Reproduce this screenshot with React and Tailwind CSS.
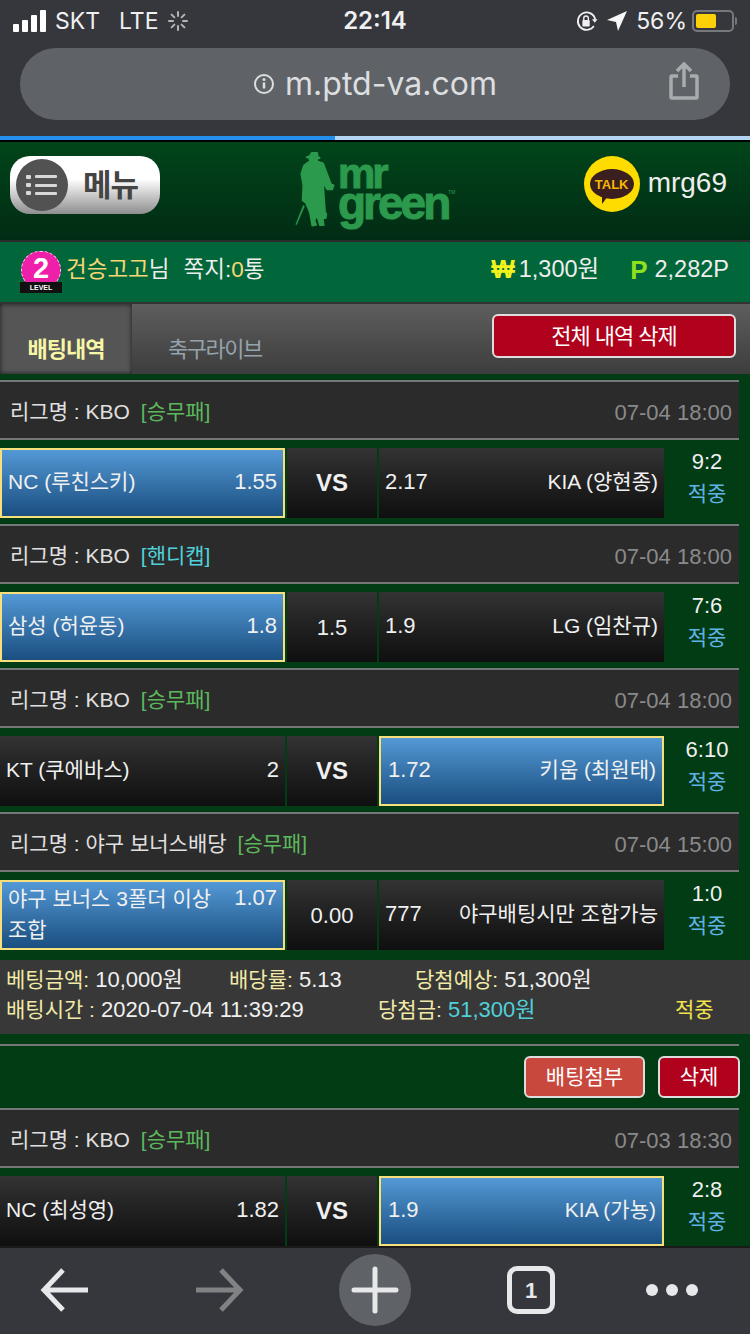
const FONT = "font-['Liberation_Sans','Noto_Sans_CJK_KR',sans-serif]";

const bets = [
  {
    league: '리그명 : KBO',
    type: '[승무패]',
    typeColor: 'text-[#5cb85c]',
    date: '07-04 18:00',
    home: 'NC (루친스키)',
    homeOdds: '1.55',
    mid: 'VS',
    awayOdds: '2.17',
    away: 'KIA (양현종)',
    pick: 'home',
    score: '9:2',
  },
  {
    league: '리그명 : KBO',
    type: '[핸디캡]',
    typeColor: 'text-[#4fd1d9]',
    date: '07-04 18:00',
    home: '삼성 (허윤동)',
    homeOdds: '1.8',
    mid: '1.5',
    awayOdds: '1.9',
    away: 'LG (임찬규)',
    pick: 'home',
    score: '7:6',
  },
  {
    league: '리그명 : KBO',
    type: '[승무패]',
    typeColor: 'text-[#5cb85c]',
    date: '07-04 18:00',
    home: 'KT (쿠에바스)',
    homeOdds: '2',
    mid: 'VS',
    awayOdds: '1.72',
    away: '키움 (최원태)',
    pick: 'away',
    score: '6:10',
  },
  {
    league: '리그명 : 야구 보너스배당',
    type: '[승무패]',
    typeColor: 'text-[#5cb85c]',
    date: '07-04 15:00',
    home: '야구 보너스 3폴더 이상 조합',
    homeOdds: '1.07',
    mid: '0.00',
    awayOdds: '777',
    away: '야구배팅시만 조합가능',
    pick: 'home',
    score: '1:0',
    wrap: true,
  },
];

const lastBet = {
  league: '리그명 : KBO',
  type: '[승무패]',
  typeColor: 'text-[#5cb85c]',
  date: '07-03 18:30',
  home: 'NC (최성영)',
  homeOdds: '1.82',
  mid: 'VS',
  awayOdds: '1.9',
  away: 'KIA (가뇽)',
  pick: 'away',
  score: '2:8',
};

function StatusBar() {
  return (
    <div className="flex h-[48px] items-center justify-between pb-[6px] pl-[13px] pr-[13px] font-['Inter',sans-serif] text-[23px] text-[#f0f0f2]">
      <div className="flex w-[260px] items-center">
        <div className="flex items-end gap-[3px]">
          <span className="h-[8px] w-[6px] rounded-[1px] bg-white" />
          <span className="h-[12px] w-[6px] rounded-[1px] bg-white" />
          <span className="h-[17px] w-[6px] rounded-[1px] bg-white" />
          <span className="h-[22px] w-[6px] rounded-[1px] bg-white" />
        </div>
        <span className="ml-[9px]">SKT</span>
        <span className="ml-[19px]">LTE</span>
        <svg width="20" height="20" viewBox="0 0 20 20" className="ml-[9px]" stroke="#b5b5b8" strokeWidth="2" strokeLinecap="round">
          <path d="M10 1v4M10 15v4M1 10h4M15 10h4M3.600 3.600l2.800 2.800M13.600 13.600l2.800 2.800M3.600 16.400l2.800-2.800M13.600 6.400l2.800-2.800" />
        </svg>
      </div>
      <span className="text-[24px] font-semibold">22:14</span>
      <div className="flex w-[260px] items-center justify-end">
        <svg width="23" height="22" viewBox="0 0 24 24" fill="none">
          <path d="M20 17.500a9.500 9.500 0 1 1 1.500-7" stroke="#f0f0f2" strokeWidth="2" />
          <path d="M18 10h6l-3 4z" fill="#f0f0f2" />
          <rect x="7.500" y="11" width="8" height="7" rx="1" fill="#f0f0f2" />
          <path d="M9 11V9a2.500 2.500 0 0 1 5 0v2" stroke="#f0f0f2" strokeWidth="1.500" />
        </svg>
        <svg width="20" height="20" viewBox="0 0 20 20" className="ml-[9px]">
          <path d="M20 0 11 20l-2-9-9-2z" fill="#f7f7f7" />
        </svg>
        <span className="ml-[9px]">56%</span>
        <div className="ml-[5px] flex h-[22px] w-[42px] items-center rounded-[5px] border-2 border-[#77787c] p-[2px]">
          <span className="h-full w-[20px] rounded-[2px] bg-[#fdd108]" />
        </div>
        <span className="ml-[1px] h-[8px] w-[2px] rounded-r bg-[#77787c]" />
      </div>
    </div>
  );
}

function UrlBar() {
  return (
    <div className="relative mx-[20px] flex h-[72px] items-center justify-center rounded-[36px] bg-[#5f6367] font-['Inter',sans-serif]">
      <svg width="22" height="22" viewBox="0 0 22 22" fill="none" className="mr-[10px]">
        <circle cx="11" cy="11" r="9" stroke="#dcdee0" strokeWidth="2" />
        <path d="M11 9.500v6" stroke="#dcdee0" strokeWidth="2.500" />
        <circle cx="11" cy="6.500" r="1.500" fill="#dcdee0" />
      </svg>
      <span className="text-[32px] text-[#dcdee0]">m.ptd-va.com</span>
      <svg width="30" height="38" viewBox="0 0 30 38" fill="none" stroke="#a9acaf" strokeWidth="3.500" className="absolute right-[31px] top-[14px]">
        <path d="M9 14H3a1 1 0 0 0-1 1v20a1 1 0 0 0 1 1h24a1 1 0 0 0 1-1V15a1 1 0 0 0-1-1h-6" />
        <path d="M15 25V3M8 9l7-7 7 7" />
      </svg>
    </div>
  );
}

function MenuButton() {
  return (
    <div className="flex h-[58px] w-[150px] items-center rounded-[20px] bg-gradient-to-b from-white from-40% to-[#8f8f8f] pl-[6px]">
      <div className="flex h-[52px] w-[52px] items-center justify-center rounded-full bg-[#525252]">
        <svg width="32" height="24" viewBox="0 0 32 24" fill="#d8d8d8">
          <rect x="0" y="2" width="5" height="4" rx="1" />
          <rect x="9" y="2" width="22" height="3" rx="1" />
          <rect x="0" y="10" width="5" height="4" rx="1" />
          <rect x="9" y="11" width="22" height="3" rx="1" />
          <rect x="0" y="18" width="5" height="4" rx="1" />
          <rect x="9" y="19" width="22" height="3" rx="1" />
        </svg>
      </div>
      <span className="ml-[15px] text-[31px] font-bold leading-none tracking-[-1px] text-[#444]">메뉴</span>
    </div>
  );
}

function Logo() {
  return (
    <div className="flex items-start">
      <svg width="43" height="76" viewBox="40 22 130 228" fill="#2b9a4d" stroke="#2b9a4d" strokeWidth="5" strokeLinejoin="round" className="mt-[-5px]">
        <path d="M93 27 110 27 112 38 118 42 110 45 110 52 128 58 138 85 152 122 160 125 156 137 140 137 128 115 130 150 134 205 138 212 136 224 127 224 130 245 118 245 110 218 102 230 107 245 95 247 88 207 76 178 66 170 68 125 62 90 70 65 88 52 86 42 78 40 88 36Z" />
        <path d="M68 185 45 243 48 244 72 188Z" strokeWidth="1" />
      </svg>
      <div className="ml-[1px] mt-[2px] flex flex-col font-['Liberation_Sans',sans-serif] font-bold text-[#2b9a4d] [-webkit-text-stroke:1px_#2b9a4d]">
        <span className="h-[29px] text-[42px] leading-[32px] tracking-[-3px]">mr</span>
        <span className="h-[40px] text-[46px] leading-[32px] tracking-[-3px]">green</span>
      </div>
      <span className="mt-[34px] text-[5px] leading-none text-[#2b9a4d]">TM</span>
    </div>
  );
}

function KakaoTalk() {
  return (
    <div className="flex h-[56px] w-[56px] items-center justify-center rounded-full bg-[#ffdc00]">
      <div className="relative flex h-[30px] w-[44px] items-center justify-center rounded-[50%] bg-[#3b1f1e]">
        <span className="font-['Liberation_Sans',sans-serif] text-[13px] font-bold leading-none text-[#f5b800]">TALK</span>
        <span className="absolute bottom-[-5px] left-[12px] h-0 w-0 border-r-[6px] border-t-[8px] border-r-transparent border-t-[#3b1f1e]" />
      </div>
    </div>
  );
}

function Header() {
  return (
    <div className="flex h-[100px] items-start border-t-2 border-black bg-gradient-to-b from-[#01451a] to-[#012c14] pl-[10px] pr-[23px]">
      <div className="mt-[14px]">
        <MenuButton />
      </div>
      <div className="ml-[134px] mt-[14px]">
        <Logo />
      </div>
      <div className="ml-auto mt-[14px] flex items-center gap-[8px]">
        <KakaoTalk />
        <span className="pb-[2px] text-[28px] leading-none text-[#eee]">mrg69</span>
      </div>
    </div>
  );
}

function LevelBadge() {
  return (
    <div className="relative h-[42px] w-[42px]">
      <div className="mx-auto flex h-[38px] w-[40px] items-center justify-center rounded-full border border-dashed border-[#ffd0ea] bg-[#ee1fa8]">
        <span className="mb-[4px] font-['Liberation_Sans',sans-serif] text-[29px] font-bold leading-none text-white">2</span>
      </div>
      <div className="absolute bottom-0 left-0 flex h-[11px] w-[42px] items-center justify-center bg-[#111]">
        <span className="font-['Liberation_Sans',sans-serif] text-[7px] font-bold leading-none text-white">LEVEL</span>
      </div>
    </div>
  );
}

function UserBar() {
  return (
    <div className="flex h-[62px] items-center justify-between border-t-2 border-[#2c2c2c] bg-[#01673a] pl-[20px] pr-[21px] text-[22.500px] text-[#eee]">
      <div className="flex items-center">
        <LevelBadge />
        <span className="mb-[4px] ml-[4px] text-[#f7d774]">건승고고</span>
        <span className="mb-[4px]">님</span>
        <span className="mb-[4px] ml-[14px]">쪽지:</span>
        <span className="mb-[4px] text-[#f7d774]">0</span>
        <span className="mb-[4px]">통</span>
      </div>
      <div className="flex items-center pb-[4px] text-[23.500px]">
        <span className="text-[25px] font-bold text-[#f2f21d]">₩</span>
        <span className="ml-[4px]">1,300원</span>
        <span className="ml-[31px] text-[26px] font-bold text-[#8fe01e]">P</span>
        <span className="ml-[7px]">2,282P</span>
      </div>
    </div>
  );
}

function Tabs() {
  return (
    <div className="flex h-[72px] border-t-2 border-[#333] bg-gradient-to-b from-[#5e5e5e] to-[#3d3d3d]">
      <div className="flex w-[132px] items-end justify-center bg-[#555] pb-[8px] shadow-[inset_0_0_5px_rgba(0,0,0,0.7)]">
        <span className="text-[22px] font-bold tracking-[-1px] text-[#f6f6a6]">배팅내역</span>
      </div>
      <div className="flex flex-1 items-end pb-[8px] pl-[36px]">
        <span className="text-[22px] tracking-[-1.500px] text-[#95a3ad]">축구라이브</span>
      </div>
      <button className="mr-[14px] mt-[10px] h-[44px] w-[244px] rounded-[6px] border-2 border-[#ddd] bg-[#b0021c] text-[22px] tracking-[-1px] text-white">
        전체 내역 삭제
      </button>
    </div>
  );
}

function LeagueRow({ bet }) {
  return (
    <div className="mr-[11px] flex h-[60px] items-center justify-between border-y-2 border-[#777] bg-[#2b2b2b] pl-[10px] pr-[7px] pt-[4px] text-[21px]">
      <div className="flex items-center text-[#e0e0e0]">
        <span>{bet.league}</span>
        <span className={`ml-[11px] ${bet.typeColor}`}>{bet.type}</span>
      </div>
      <span className="text-[22px] text-[#8a8a8a]">{bet.date}</span>
    </div>
  );
}

function TeamCell({ name, odds, side, picked, wrap }) {
  const box = picked
    ? 'border-2 border-[#f7df7c] bg-gradient-to-b from-[#5499d6] to-[#1a4f80]'
    : 'bg-gradient-to-b from-[#333] to-[#0f0f0f]';
  return (
    <div className={`flex h-[70px] w-[285px] items-center justify-between px-[6px] pb-[3px] text-[21px] leading-[31px] text-[#f0f0f0] ${box}`}>
      {side === 'home' ? (
        <>
          <span className="max-w-[215px]">{name}</span>
          <span className={`text-[22px] ${wrap ? 'self-start' : ''}`}>{odds}</span>
        </>
      ) : (
        <>
          <span className={`text-[22px] ${picked ? 'ml-[1px]' : ''}`}>{odds}</span>
          <span>{name}</span>
        </>
      )}
    </div>
  );
}

function MatchRow({ bet }) {
  return (
    <div className="flex h-[70px] gap-[2px]">
      <TeamCell name={bet.home} odds={bet.homeOdds} side="home" picked={bet.pick === 'home'} wrap={bet.wrap} />
      <div className="flex w-[90px] items-center justify-center bg-gradient-to-b from-[#333] to-[#0f0f0f] text-[#f0f0f0]">
        {bet.mid === 'VS' ? (
          <span className="text-[24px] font-bold">VS</span>
        ) : (
          <span className="text-[22px]">{bet.mid}</span>
        )}
      </div>
      <TeamCell name={bet.away} odds={bet.awayOdds} side="away" picked={bet.pick === 'away'} wrap={bet.wrap} />
      <div className="mt-[-2px] flex w-[82px] flex-col items-center text-[22px] leading-[32px]">
        <span className="text-[#f0f0f0]">{bet.score}</span>
        <span className="text-[21px] text-[#5fb4e6]">적중</span>
      </div>
    </div>
  );
}

function Bet({ bet }) {
  return (
    <div>
      <LeagueRow bet={bet} />
      <div className="mb-[6px] mt-[8px]">
        <MatchRow bet={bet} />
      </div>
    </div>
  );
}

function Summary() {
  const label = 'text-[21px] text-[#f2eaa6]';
  return (
    <div className="mt-[10px] flex h-[74px] flex-col justify-center bg-[#383838] pb-[4px] pl-[6px] text-[22px] leading-[30px] text-[#f0f0f0]">
      <div className="flex">
        <span className="w-[223px]"><span className={label}>베팅금액:</span> 10,000원</span>
        <span className="w-[186px]"><span className={label}>배당률:</span> 5.13</span>
        <span><span className={label}>당첨예상:</span> 51,300원</span>
      </div>
      <div className="flex">
        <span className="w-[372px]"><span className={label}>배팅시간 :</span> 2020-07-04 11:39:29</span>
        <span className="w-[297px]"><span className={label}>당첨금:</span> <span className="text-[#4fd1d9]">51,300원</span></span>
        <span className="text-[21px] text-[#f2e34c]">적중</span>
      </div>
    </div>
  );
}

function BottomBar() {
  return (
    <div className="flex h-[88px] shrink-0 items-center border-t-2 border-[#1a1a1a] bg-[#36373c] pb-[2px] pl-[40px]">
      <svg width="48" height="44" viewBox="0 0 48 44" fill="none" stroke="#e6e8ea" strokeWidth="5">
        <path d="M48 22H4M23 2 4 22l19 20" />
      </svg>
      <svg width="48" height="44" viewBox="0 0 48 44" fill="none" stroke="#808284" strokeWidth="5" className="ml-[108px]">
        <path d="M0 22h44M25 2l19 20-19 20" />
      </svg>
      <div className="ml-[95px] flex h-[72px] w-[72px] items-center justify-center rounded-full bg-[#5f6367]">
        <svg width="48" height="48" viewBox="0 0 48 48" stroke="#e6e8ea" strokeWidth="5" strokeLinecap="round">
          <path d="M24 3v42M3 24h42" />
        </svg>
      </div>
      <div className="ml-[96px] flex h-[48px] w-[48px] items-center justify-center rounded-[10px] border-[5px] border-[#e6e8ea] text-[22px] font-semibold text-[#e6e8ea]">
        1
      </div>
      <div className="ml-[91px] flex gap-[8px]">
        <span className="h-[12px] w-[12px] rounded-full bg-[#e6e8ea]" />
        <span className="h-[12px] w-[12px] rounded-full bg-[#e6e8ea]" />
        <span className="h-[12px] w-[12px] rounded-full bg-[#e6e8ea]" />
      </div>
    </div>
  );
}

export default function App() {
  return (
    <div className={`flex h-[1334px] w-[750px] flex-col overflow-hidden bg-[#013c15] ${FONT}`}>
      <div className="h-[136px] shrink-0 bg-[#36373c]">
        <StatusBar />
        <UrlBar />
      </div>
      <div className="flex h-[4px] shrink-0 bg-[#b4d5f2]">
        <div className="w-[335px] bg-[#2490ee]" />
      </div>
      <Header />
      <UserBar />
      <Tabs />
      <div className="min-h-0 flex-1 overflow-hidden pt-[6px]">
        {bets.map((bet, i) => (
          <Bet key={i} bet={bet} />
        ))}
        <Summary />
        <div className="mr-[11px] mt-[10px] h-[2px] bg-[#777]" />
        <div className="flex h-[62px] items-center justify-end gap-[13px] pr-[10px]">
          <button className="h-[42px] w-[121px] rounded-[6px] border-2 border-[#ddd] bg-[#c9483e] text-[21px] text-white">배팅첨부</button>
          <button className="h-[42px] w-[82px] rounded-[6px] border-2 border-[#ddd] bg-[#b0021c] text-[21px] text-white">삭제</button>
        </div>
        <Bet bet={lastBet} />
      </div>
      <BottomBar />
    </div>
  );
}
